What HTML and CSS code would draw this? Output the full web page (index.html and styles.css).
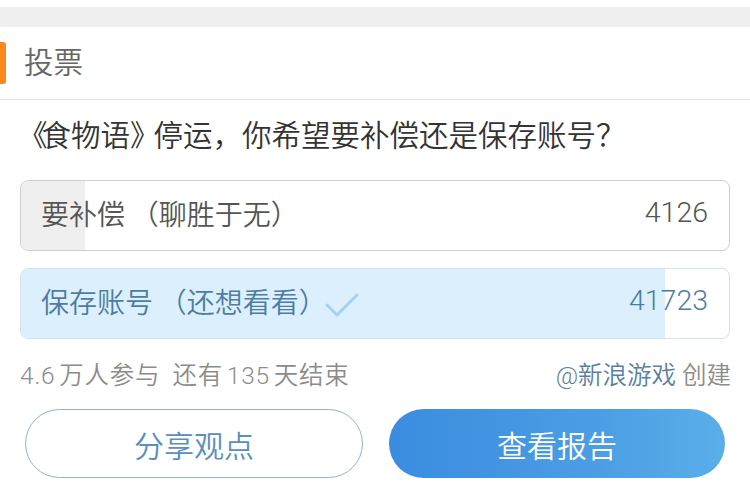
FILE: index.html
```html
<!DOCTYPE html>
<html lang="zh">
<head>
<meta charset="utf-8">
<link rel="stylesheet" href="styles.css">
</head>
<body>
<div class="top-white"></div>
<div class="band"></div>
<div class="header">
  <div class="mark"></div>
  <div class="title">投票</div>
</div>
<div class="content">
  <div class="question"><span class="bk">《</span>食物语<span class="bk">》</span>停运，你希望要补偿还是保存账号？</div>
  <div class="option">
    <div class="fill fill-gray" style="width:9%"></div>
    <div class="opt-label">要补偿&#8201;（聊胜于无）</div>
    <div class="opt-count">4126</div>
  </div>
  <div class="option chosen">
    <div class="fill fill-blue" style="width:91%"></div>
    <div class="opt-label">保存账号&#8201;（还想看看）<svg class="check" width="34" height="26" viewBox="0 0 34 26"><path d="M2 13 L12 23 L32 3" fill="none" stroke="#a6d1f3" stroke-width="3" stroke-linecap="round" stroke-linejoin="round"/></svg></div>
    <div class="opt-count">41723</div>
  </div>
  <div class="meta">
    <div class="meta-left">4.6 万人参与<span class="gap"></span>还有 135 天结束</div>
    <div class="meta-right"><span class="author">@新浪游戏</span> 创建</div>
  </div>
  <div class="buttons">
    <div class="btn btn-outline">分享观点</div>
    <div class="btn btn-solid">查看报告</div>
  </div>
</div>
</body>
</html>
```
FILE: styles.css
```css
html, body {
  margin: 0;
  padding: 0;
  background: #ffffff;
}
body {
  width: 750px;
  height: 488px;
  overflow: hidden;
  font-family: "Roboto", "Liberation Sans", "Noto Sans CJK SC", sans-serif;
  font-weight: 350;
}
.top-white {
  height: 7px;
}
.band {
  height: 20px;
  background: #efefef;
}
.header {
  height: 72px;
  border-bottom: 1px solid #e4e4e4;
  display: flex;
  align-items: center;
}
.mark {
  width: 6px;
  height: 42px;
  background: #f7891f;
  border-radius: 0 3px 3px 0;
}
.title {
  margin-left: 18px;
  font-size: 29.5px;
  color: #666666;
  line-height: 40px;
}
.content {
  padding: 0 20px;
}
.question {
  padding-top: 16px;
  font-size: 29.5px;
  line-height: 40px;
  color: #333333;
  white-space: nowrap;
  text-indent: -2px;
}
.bk {
  letter-spacing: -6px;
}
.option {
  position: relative;
  margin-top: 24px;
  height: 69px;
  border: 1px solid #cfcfcf;
  border-radius: 8px;
  overflow: hidden;
  display: flex;
  align-items: center;
  justify-content: space-between;
  padding: 0 21px 0 20px;
}
.option.chosen {
  margin-top: 17px;
  border-color: #d4e2ec;
}
.fill {
  position: absolute;
  left: 0;
  top: 0;
  bottom: 0;
}
.fill-gray {
  background: #efefef;
}
.fill-blue {
  background: #dbf0fc;
}
.opt-label, .opt-count {
  position: relative;
  font-size: 28px;
  line-height: 40px;
  color: #555555;
  display: flex;
  align-items: center;
  white-space: pre;
}
.opt-count {
  margin-top: -6px;
  font-size: 28.5px;
}
.chosen .opt-label, .chosen .opt-count {
  color: #4f7ca2;
}
.check {
  margin-left: -2px;
  margin-top: 2px;
}
.meta {
  margin-top: 22px;
  display: flex;
  justify-content: space-between;
  align-items: center;
  font-size: 24.5px;
  line-height: 30px;
  color: #8c8c8c;
}
.meta-left {
  word-spacing: -3px;
  letter-spacing: 0.8px;
}
.gap {
  display: inline-block;
  width: 12px;
}
.meta-right {
  margin-right: -1px;
}
.author {
  color: #5a7fa2;
}
.buttons {
  margin-top: 18px;
  padding: 0 5px;
  display: flex;
  gap: 26px;
}
.btn {
  flex: 1;
  height: 69px;
  border-radius: 35px;
  display: flex;
  align-items: center;
  justify-content: center;
  font-size: 30px;
  box-sizing: border-box;
}
.btn-outline {
  border: 1.5px solid #8fb3cf;
  color: #5a8fbd;
}
.btn-solid {
  background: linear-gradient(90deg, #3a8ce0 0%, #4b9de4 60%, #59afe9 100%);
  color: #ffffff;
}
```
